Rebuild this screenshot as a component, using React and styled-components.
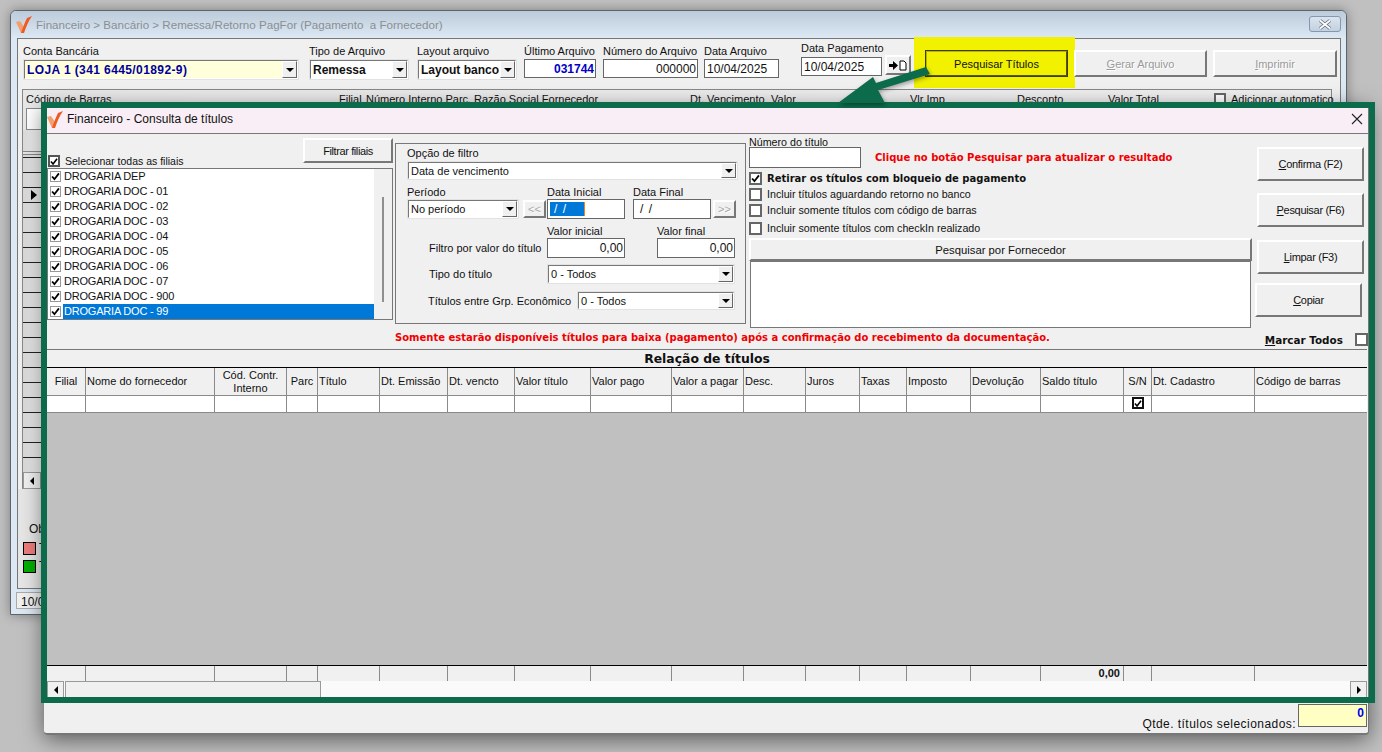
import React from "react";
import styled, { createGlobalStyle } from "styled-components";

const GlobalStyle = createGlobalStyle`
  html, body { margin: 0; padding: 0; height: 100%; overflow: hidden; }
  #root { height: 100%; }
  * { box-sizing: border-box; }
  body {
    font-family: "Liberation Sans", Arial, sans-serif;
    font-size: 11px;
    color: #111;
  }
`;

const GREEN = "#0b6b4b";
const GRAY = "#f0f0f0";
const LINE = "#8a8a8a";

const Desktop = styled.div`
  position: relative;
  width: 1382px;
  height: 752px;
  background: #c0c0c0;
  overflow: hidden;
`;

/* ---------- janela de trás ---------- */
const BackWindow = styled.div`
  position: absolute;
  left: 10px;
  top: 10px;
  width: 1337px;
  height: 605px;
  display: flex;
  flex-direction: column;
  border: 1px solid #5f6468;
  border-radius: 6px 6px 0 0;
  background: #dce8f3;
  box-shadow: 0 0 12px rgba(0, 0, 0, 0.35);
`;

const BackTitle = styled.div`
  height: 26px;
  flex: none;
  display: flex;
  align-items: center;
  justify-content: space-between;
  padding: 0 5px 0 5px;
  border-radius: 6px 6px 0 0;
  background: linear-gradient(#bccbda, #dbe7f3);
  color: #8a8f94;
  font-size: 11.6px;
`;

const TitleLeft = styled.div`
  display: flex;
  align-items: center;
  gap: 4px;
`;

const WinClose = styled.div`
  width: 32px;
  height: 16px;
  display: flex;
  align-items: center;
  justify-content: center;
  border: 1px solid #8398ad;
  border-radius: 3px;
  background: linear-gradient(#dbe5ef, #c2d0df);
`;

const BackBody = styled.div`
  flex: 1;
  padding: 1px 5px 4px 6px;
  display: flex;
  flex-direction: column;
  min-height: 0;
`;

const BackPanel = styled.div`
  height: 551px;
  flex: none;
  display: flex;
  flex-direction: column;
  border: 1px solid #777;
  background: ${GRAY};
`;

const TopBar = styled.div`
  height: 50px;
  flex: none;
  display: flex;
  align-items: flex-start;
  padding: 6px 0 0 5px;
`;

const Field = styled.div`
  display: flex;
  flex-direction: column;
  width: ${(p) => p.$w}px;
  margin-left: ${(p) => p.$ml || 0}px;
  margin-top: ${(p) => p.$mt || 0}px;
`;

const Label = styled.label`
  display: block;
  height: ${(p) => p.$h || 14}px;
  line-height: 12px;
  white-space: nowrap;
`;

const Input = styled.div`
  height: ${(p) => p.$h || 20}px;
  width: ${(p) => (p.$w ? `${p.$w}px` : "100%")};
  flex: none;
  border: 1px solid #666;
  background: #fff;
  display: flex;
  align-items: center;
  justify-content: ${(p) => (p.$right ? "flex-end" : "flex-start")};
  padding: 0 1px 0 2px;
  font-size: 12px;
  color: ${(p) => p.$color || "#111"};
  font-weight: ${(p) => (p.$bold ? "bold" : "normal")};
  white-space: nowrap;
  overflow: hidden;
`;

const ComboBox = styled.div`
  height: ${(p) => p.$h || 20}px;
  width: ${(p) => (p.$w ? `${p.$w}px` : "100%")};
  flex: none;
  display: flex;
  align-items: center;
  justify-content: space-between;
  border: 2px solid;
  border-color: #777 #fff #fff #777;
  outline: 1px solid #e2e2e2;
  outline-offset: -1px;
  background: ${(p) => p.$bg || "#fff"};
  padding-left: 2px;
  font-size: ${(p) => p.$fs || 12}px;
  font-weight: ${(p) => (p.$bold ? "bold" : "normal")};
  letter-spacing: ${(p) => p.$ls || 0}px;
  color: ${(p) => p.$color || "#111"};
  white-space: nowrap;
  overflow: hidden;
`;

const ComboArrow = styled.span`
  width: 15px;
  height: 100%;
  flex: none;
  display: flex;
  align-items: center;
  justify-content: center;
  background: ${GRAY};
  border: 1px solid;
  border-color: #fff #666 #666 #fff;
  &::after {
    content: "";
    border-left: 4px solid transparent;
    border-right: 4px solid transparent;
    border-top: 4px solid #000;
  }
`;

const Button = styled.button`
  width: ${(p) => p.$w}px;
  height: ${(p) => p.$h}px;
  margin-left: ${(p) => p.$ml || 0}px;
  margin-top: ${(p) => p.$mt || 0}px;
  flex: none;
  padding: 0;
  background: ${(p) => p.$bg || GRAY};
  border: 2px solid;
  border-color: #fff #777 #777 #fff;
  font: inherit;
  font-size: 11px;
  letter-spacing: ${(p) => p.$ls || 0}px;
  color: ${(p) => (p.$off ? "#9a9a9a" : "#111")};
  text-shadow: ${(p) => (p.$off ? "1px 1px 0 #fff" : "none")};
  display: flex;
  align-items: center;
  justify-content: center;
  white-space: pre;
`;

const YellowMark = styled.div`
  width: 161px;
  height: 51px;
  margin: -8px 0 0 3px;
  flex: none;
  padding: 13px 0 0 11px;
  background: #f1f100;
`;

const DarkButton = styled(Button)`
  border-color: #b3b300 #575700 #575700 #b3b300;
  outline: 1px solid #3e3e00;
  outline-offset: -1px;
  background: #f1f100;
`;

const BackGrid = styled.div`
  margin: 0 8px 0 4px;
  height: 400px;
  flex: none;
  border: 1px solid #888;
  border-bottom: 0;
  display: flex;
  flex-direction: column;
  background: linear-gradient(90deg, #e8e8e8, ${GRAY});
`;

const BackHead = styled.div`
  height: 15px;
  flex: none;
  display: grid;
  grid-template-columns: 316px 27px 108px 216px 81px 139px 107px 91px 106px 1fr;
  padding-top: 3px;
  line-height: 12px;
  white-space: nowrap;
`;

const HeadCode = styled.span`
  padding-left: 3px;
`;

const AutoAdd = styled.span`
  display: flex;
  align-items: center;
  gap: 5px;
`;

const FilterBox = styled.div`
  margin: 3px 0 0 3px;
  height: 22px;
  flex: none;
  width: 100px;
  border: 1px solid #888;
  background: #fff;
`;

const HeaderCell = styled.div`
  width: 18px;
  height: 22px;
  flex: none;
  background: linear-gradient(90deg, #dcdcdc, #f8f8f8);
  border-bottom: 1px solid #888;
`;

const IndicatorCol = styled.div`
  margin-top: 2px;
  width: 18px;
  flex: 1;
  display: flex;
  flex-direction: column;
  border-top: 1px solid #888;
  overflow: hidden;
`;

const IndicatorRow = styled.div`
  height: 15px;
  flex: none;
  border-bottom: 1px solid #222;
  background: linear-gradient(90deg, #d8d8d8, #f0f0f0);
  display: flex;
  align-items: center;
  justify-content: center;
  &:first-child { height: 3px; }
`;

const RowPointer = styled.span`
  border-top: 5px solid transparent;
  border-bottom: 5px solid transparent;
  border-left: 6px solid #000;
  margin-left: 4px;
`;

const SmallScroll = styled.div`
  width: 18px;
  height: 17px;
  flex: none;
  border: 1px solid #999;
  background: ${GRAY};
  display: flex;
  align-items: center;
  justify-content: center;
`;

const ArrowLeft = styled.span`
  border-top: 4px solid transparent;
  border-bottom: 4px solid transparent;
  border-right: 4px solid #000;
`;

const ArrowRight = styled.span`
  border-top: 4px solid transparent;
  border-bottom: 4px solid transparent;
  border-left: 4px solid #000;
`;

const ObsBlock = styled.div`
  padding: 33px 0 0 5px;
  flex: 1;
  background: linear-gradient(90deg, #e6e6e6, ${GRAY});
  display: flex;
  flex-direction: column;
  font-size: 12px;
`;

const ObsTitle = styled.div`
  padding-left: 6px;
  height: 17px;
`;

const LegendRow = styled.div`
  display: flex;
  align-items: center;
  gap: 3px;
  height: 18px;
`;

const Swatch = styled.span`
  width: 13px;
  height: 13px;
  border: 1px solid #000;
  background: ${(p) => p.$color};
`;

const StatusBox = styled.div`
  margin: 3px 0 0 -1px;
  width: 80px;
  height: 17px;
  flex: none;
  border: 1px solid #aaa;
  background: ${GRAY};
  padding: 2px 0 0 4px;
  font-size: 12px;
`;

/* ---------- dialogo ---------- */
const Dialog = styled.div`
  position: absolute;
  left: 44px;
  top: 105px;
  width: 1325px;
  height: 630px;
  display: flex;
  flex-direction: column;
  padding-left: 3px;
  background: ${GRAY};
  border-right: 1px solid #777;
  border-bottom: 2px solid #777;
  border-radius: 0 0 4px 4px;
  box-shadow: 0 4px 22px rgba(0, 0, 0, 0.55);
`;

const GreenFrame = styled.div`
  position: absolute;
  left: -3px;
  top: -3px;
  width: 1334px;
  height: 601px;
  border: 6px solid ${GREEN};
  pointer-events: none;
`;

const DialogTitle = styled.div`
  margin-top: 2px;
  height: 27px;
  flex: none;
  display: flex;
  align-items: center;
  justify-content: space-between;
  padding: 0 4px 2px 0;
  background: #f9eef5;
  border-bottom: 1px solid #777;
  font-size: 12px;
`;

const CloseX = styled.span`
  width: 14px;
  height: 14px;
  display: flex;
`;

const FormRow = styled.div`
  height: 195px;
  flex: none;
  display: flex;
`;

const FilialCol = styled.div`
  width: 346px;
  flex: none;
  display: flex;
  flex-direction: column;
`;

const FilialHead = styled.div`
  display: flex;
  align-items: flex-end;
  justify-content: space-between;
  padding: 6px 0 0 1px;
  height: 34px;
  font-size: 10.5px;
`;

const CheckLine = styled.div`
  display: flex;
  align-items: center;
  gap: ${(p) => p.$gap || 5}px;
  height: ${(p) => p.$h || 12}px;
  margin-top: ${(p) => p.$mt || 0}px;
  font-weight: ${(p) => (p.$bold ? "bold" : "normal")};
  font-family: ${(p) => (p.$bold ? '"DejaVu Sans", sans-serif' : "inherit")};
  font-size: ${(p) => (p.$bold ? "10px" : "inherit")};
  white-space: nowrap;
`;

const Box = styled.span`
  width: ${(p) => p.$s || 13}px;
  height: ${(p) => p.$s || 13}px;
  flex: none;
  display: flex;
  align-items: center;
  justify-content: center;
  background: #fff;
  border: ${(p) => p.$bw || 2}px solid ${(p) => p.$bc || "#666"};
`;

const RowCheck = styled(Box)`
  margin-bottom: 2px;
`;

const FilterButton = styled(Button)`
  margin-bottom: 5px;
`;

const FilialList = styled.div`
  height: 152px;
  flex: none;
  display: flex;
  border: 1px solid #777;
  background: #fff;
`;

const FilialItems = styled.div`
  flex: 1;
  display: flex;
  flex-direction: column;
`;

const FilialItem = styled.div`
  height: 15px;
  flex: none;
  display: flex;
  align-items: center;
  padding-left: 2px;
  gap: 2px;
  font-size: 11px;
  letter-spacing: -0.2px;
  & > em {
    flex: 1;
    font-style: normal;
    line-height: 15px;
    padding-left: 1px;
    background: ${(p) => (p.$active ? "#0078d7" : "transparent")};
    color: ${(p) => (p.$active ? "#fff" : "#111")};
  }
`;

const ListTrack = styled.div`
  width: 18px;
  flex: none;
  background: ${GRAY};
  display: flex;
  justify-content: center;
  padding-top: 28px;
`;

const ListThumb = styled.span`
  width: 2px;
  height: 105px;
  background: #8f8f8f;
`;

const GroupBox = styled.div`
  margin: 9px 0 0 2px;
  width: 351px;
  height: 181px;
  flex: none;
  border: 1px solid #777;
  padding: 3px 0 0 11px;
  display: flex;
  flex-direction: column;
`;

const FlexLine = styled.div`
  display: flex;
  align-items: ${(p) => p.$align || "flex-start"};
  margin-top: ${(p) => p.$mt || 0}px;
  padding-left: ${(p) => p.$pl || 0}px;
`;

const FieldCaption = styled.span`
  width: ${(p) => p.$w}px;
  flex: none;
  white-space: nowrap;
  font-size: 11px;
`;

const ValueInput = styled(Input)`
  margin-left: ${(p) => p.$ml || 0}px;
`;

const ArrowButton = styled(Button)`
  color: #a8a8a8;
  font-size: 11px;
  text-shadow: 1px 1px 0 #fff;
`;

const Masked = styled.span`
  display: inline-block;
  width: ${(p) => p.$w || 40}px;
  height: 14px;
  padding-left: 4px;
  line-height: 14px;
  background: ${(p) => (p.$sel ? "#0078d7" : "transparent")};
  border-right: ${(p) => (p.$sel ? "1px solid #f08020" : "none")};
  color: ${(p) => (p.$sel ? "#fff" : "#111")};
  letter-spacing: 1px;
`;

const RightCol = styled.div`
  margin-left: 3px;
  width: 503px;
  flex: none;
  display: flex;
  flex-direction: column;
  padding-top: 2px;
  font-size: 10.7px;
`;

const RedText = styled.span`
  color: #f00000;
  font-family: "DejaVu Sans", sans-serif;
  font-weight: bold;
  font-size: 10px;
  white-space: nowrap;
  margin-left: ${(p) => p.$ml || 0}px;
`;

const FornecedorButton = styled(Button)`
  width: 503px;
  height: 23px;
  margin-top: 4px;
  font-size: 11.3px;
`;

const FornecedorBox = styled.div`
  margin-left: 1px;
  width: 501px;
  height: 67px;
  flex: none;
  border: 1px solid #777;
  background: #fff;
`;

const ActionCol = styled.div`
  margin-left: 4px;
  flex: 1;
  display: flex;
  flex-direction: column;
  padding-top: 13px;
`;

const ActionButton = styled(Button)`
  letter-spacing: -0.3px;
`;

const NoticeRow = styled.div`
  height: 20px;
  flex: none;
  display: flex;
  align-items: flex-start;
  padding: 3px 0 0 348px;
  gap: 215px;
`;

const MarkAll = styled.div`
  display: flex;
  align-items: center;
  gap: 12px;
  margin-top: 1px;
  font-family: "DejaVu Sans", sans-serif;
  font-weight: bold;
  font-size: 10.4px;
  white-space: nowrap;
`;

const TableArea = styled.div`
  flex: none;
  height: 349px;
  margin-right: 1px;
  display: flex;
  flex-direction: column;
  border-top: 1px solid #777;
`;

const TableTitle = styled.div`
  height: 18px;
  flex: none;
  text-align: center;
  font-weight: bold;
  font-family: "DejaVu Sans", sans-serif;
  font-size: 12.4px;
  line-height: 18px;
  border-bottom: 1px solid #000;
`;

const COLS = [39, 129, 72, 31, 62, 68, 67, 76, 81, 72, 62, 54, 47, 64, 70, 83, 28, 103, 113];

const TableRow = styled.div`
  display: grid;
  grid-template-columns: ${COLS.map((c) => `${c}px`).join(" ")};
  height: ${(p) => p.$h}px;
  flex: none;
  background: ${(p) => p.$bg || GRAY};
  border-top: ${(p) => (p.$top ? "1px solid #000" : "none")};
  border-bottom: ${(p) => (p.$bottom ? `1px solid ${LINE}` : "none")};
`;

const Cell = styled.div`
  display: flex;
  align-items: center;
  justify-content: ${(p) => p.$align || "flex-start"};
  padding: 0 ${(p) => (p.$align === "flex-end" ? 3 : 1)}px 0 1px;
  border-right: 1px solid ${LINE};
  text-align: center;
  line-height: 13px;
  white-space: pre-line;
  overflow: hidden;
  font-weight: ${(p) => (p.$bold ? "bold" : "normal")};
  &:last-child { border-right: 0; }
`;

const TableEmpty = styled.div`
  flex: 1;
  background: #c0c0c0;
`;

const HScroll = styled.div`
  height: 17px;
  flex: none;
  display: flex;
  background: #fafafa;
`;

const ScrollBtn = styled.div`
  width: 17px;
  flex: none;
  display: flex;
  align-items: center;
  justify-content: center;
  background: ${GRAY};
  border: 1px solid #9a9a9a;
`;

const ScrollThumb = styled.div`
  width: 256px;
  margin-left: 1px;
  background: ${GRAY};
  border: 1px solid #9a9a9a;
`;

const ScrollSpace = styled.div`
  flex: 1;
`;

const BottomBar = styled.div`
  flex: 1;
  display: flex;
  justify-content: flex-end;
  align-items: flex-start;
  gap: 2px;
  padding: 6px 1px 0 0;
`;

const QtyLabel = styled.span`
  margin-top: 13px;
  font-size: 12px;
  letter-spacing: 0.45px;
`;

const QtyBox = styled.div`
  width: 69px;
  height: 23px;
  border: 1px solid #666;
  background: #ffffc4;
  color: #0000f0;
  font-weight: bold;
  font-size: 12px;
  text-align: right;
  padding: 1px 2px 0 0;
`;

const ArrowOverlay = styled.svg`
  position: absolute;
  left: 830px;
  top: 60px;
  width: 110px;
  height: 50px;
  pointer-events: none;
  filter: drop-shadow(1px 2px 2px rgba(0, 0, 0, 0.35));
`;

const Logo = () => (
  <svg width="16" height="17" viewBox="0 0 16 17">
    <path d="M0 6 L4 5 L8 11 L7 17 L5 17 Z" fill="#f2a06e" />
    <path d="M5 17 L8 17 C10 11 12 6 16 0 L11 2 C9 6 7 11 5 17 Z" fill="#ee5a22" />
  </svg>
);

const Tick = ({ size = 9 }) => (
  <svg width={size} height={size} viewBox="0 0 10 10">
    <path d="M1.2 5 L3.8 8 L8.8 1.5" fill="none" stroke="#000" strokeWidth="2" />
  </svg>
);

const CloseGlyph = () => (
  <svg width="14" height="11" viewBox="0 0 14 11">
    <path d="M2 1.5 L12 9.5 M12 1.5 L2 9.5" stroke="#5f6b78" strokeWidth="3.4" />
    <path d="M2 1.5 L12 9.5 M12 1.5 L2 9.5" stroke="#fff" strokeWidth="1.8" />
  </svg>
);

const ArrowDocIcon = () => (
  <svg width="18" height="11" viewBox="0 0 18 11">
    <path d="M0 4 H4 V1 L9 5.5 L4 10 V7 H0 Z" fill="#000" />
    <path d="M11 1 H15 L17 3 V10 H11 Z" fill="#fff" stroke="#000" />
  </svg>
);

const filiais = [
  "DROGARIA DEP",
  "DROGARIA DOC - 01",
  "DROGARIA DOC - 02",
  "DROGARIA DOC - 03",
  "DROGARIA DOC - 04",
  "DROGARIA DOC - 05",
  "DROGARIA DOC - 06",
  "DROGARIA DOC - 07",
  "DROGARIA DOC - 900",
  "DROGARIA DOC - 99",
];

const headers = [
  "Filial",
  "Nome do fornecedor",
  "Cód. Contr.\nInterno",
  "Parc",
  "Título",
  "Dt. Emissão",
  "Dt. vencto",
  "Valor título",
  "Valor pago",
  "Valor a pagar",
  "Desc.",
  "Juros",
  "Taxas",
  "Imposto",
  "Devolução",
  "Saldo título",
  "S/N",
  "Dt. Cadastro",
  "Código de barras",
];

const indicatorRows = Array.from({ length: 22 });

export default function App() {
  return (
    <Desktop>
      <GlobalStyle />
      <BackWindow>
        <BackTitle>
          <TitleLeft>
            <Logo />
            Financeiro &gt; Bancário &gt; Remessa/Retorno PagFor (Pagamento&nbsp; a Fornecedor)
          </TitleLeft>
          <WinClose><CloseGlyph /></WinClose>
        </BackTitle>
        <BackBody>
          <BackPanel>
            <TopBar>
              <Field $w={276}>
                <Label>Conta Bancária</Label>
                <ComboBox $h={21} $bg="#ffffdc" $bold $color="#00009c" $ls={0.4}>
                  LOJA 1 (341 6445/01892-9)
                  <ComboArrow />
                </ComboBox>
              </Field>
              <Field $w={100} $ml={10}>
                <Label>Tipo de Arquivo</Label>
                <ComboBox $h={21} $bold>
                  Remessa
                  <ComboArrow />
                </ComboBox>
              </Field>
              <Field $w={100} $ml={8}>
                <Label>Layout arquivo</Label>
                <ComboBox $h={21} $bold>
                  Layout banco
                  <ComboArrow />
                </ComboBox>
              </Field>
              <Field $w={72} $ml={7}>
                <Label>Último Arquivo</Label>
                <Input $h={19} $right $bold $color="#0000c8">031744</Input>
              </Field>
              <Field $w={95} $ml={7}>
                <Label>Número do Arquivo</Label>
                <Input $h={19} $right>000000</Input>
              </Field>
              <Field $w={75} $ml={6}>
                <Label>Data Arquivo</Label>
                <Input $h={19}>10/04/2025</Input>
              </Field>
              <Field $w={81} $ml={22} $mt={-3}>
                <Label $h={15}>Data Pagamento</Label>
                <Input $h={19}>10/04/2025</Input>
              </Field>
              <Button $w={26} $h={20} $ml={3} $mt={10}><ArrowDocIcon /></Button>
              <YellowMark>
                <DarkButton $w={143} $h={27}>Pesquisar Títulos</DarkButton>
              </YellowMark>
              <Button $w={133} $h={27} $ml={-1} $mt={5} $off>
                <span><u>G</u>erar Arquivo</span>
              </Button>
              <Button $w={124} $h={27} $ml={6} $mt={5} $off>
                <span><u>I</u>mprimir</span>
              </Button>
            </TopBar>
            <BackGrid>
              <BackHead>
                <HeadCode>Código de Barras</HeadCode>
                <span>Filial</span>
                <span>Número Interno Parc.</span>
                <span>Razão Social Fornecedor</span>
                <span>Dt. Vencimento</span>
                <span>Valor</span>
                <span>Vlr Imp</span>
                <span>Desconto</span>
                <span>Valor Total</span>
                <AutoAdd>
                  <Box $s={12} />
                  Adicionar automatico
                </AutoAdd>
              </BackHead>
              <FilterBox />
              <HeaderCell />
              <IndicatorCol>
                {indicatorRows.map((_, i) => (
                  <IndicatorRow key={i}>{i === 3 && <RowPointer />}</IndicatorRow>
                ))}
              </IndicatorCol>
              <SmallScroll>
                <ArrowLeft />
              </SmallScroll>
            </BackGrid>
            <ObsBlock>
              <ObsTitle>Observação</ObsTitle>
              <LegendRow>
                <Swatch $color="#ee7b7b" />
                Títulos
              </LegendRow>
              <LegendRow>
                <Swatch $color="#00ae00" />
                Títulos
              </LegendRow>
            </ObsBlock>
          </BackPanel>
          <StatusBox>10/04/2025</StatusBox>
        </BackBody>
      </BackWindow>

      <Dialog>
        <DialogTitle>
          <TitleLeft>
            <Logo />
            Financeiro - Consulta de títulos
          </TitleLeft>
          <CloseX>
            <svg width="14" height="14" viewBox="0 0 14 14">
              <path d="M2 2 L12 12 M12 2 L2 12" stroke="#222" strokeWidth="1.1" />
            </svg>
          </CloseX>
        </DialogTitle>
        <FormRow>
          <FilialCol>
            <FilialHead>
              <CheckLine $h={14} $gap={5}>
                <Box $s={12} $bc="#555"><Tick /></Box>
                Selecionar todas as filiais
              </CheckLine>
              <FilterButton $w={90} $h={25} $ls={-0.4}>Filtrar filiais</FilterButton>
            </FilialHead>
            <FilialList>
              <FilialItems>
                {filiais.map((f, i) => (
                  <FilialItem key={f} $active={i === filiais.length - 1}>
                    <Box $s={11} $bw={1} $bc="#999"><Tick /></Box>
                    <em>{f}</em>
                  </FilialItem>
                ))}
              </FilialItems>
              <ListTrack>
                <ListThumb />
              </ListTrack>
            </FilialList>
          </FilialCol>

          <GroupBox>
            <Label $h={14}>Opção de filtro</Label>
            <ComboBox $w={331} $h={19} $fs={11}>
              Data de vencimento
              <ComboArrow />
            </ComboBox>
            <FlexLine $mt={6}>
              <Field $w={112}>
                <Label $h={13}>Período</Label>
                <ComboBox $h={20} $fs={11}>
                  No período
                  <ComboArrow />
                </ComboBox>
              </Field>
              <ArrowButton $w={23} $h={18} $ml={4} $mt={14}>&lt;&lt;</ArrowButton>
              <Field $w={78} $ml={1}>
                <Label $h={13}>Data Inicial</Label>
                <Input $h={20}><Masked $w={35} $sel>/ /</Masked></Input>
              </Field>
              <Field $w={78} $ml={8}>
                <Label $h={13}>Data Final</Label>
                <Input $h={20}><Masked> / /</Masked></Input>
              </Field>
              <ArrowButton $w={23} $h={18} $ml={2} $mt={14}>&gt;&gt;</ArrowButton>
            </FlexLine>
            <FlexLine $mt={6} $pl={140}>
              <Field $w={110}><Label $h={13}>Valor inicial</Label></Field>
              <Label $h={13}>Valor final</Label>
            </FlexLine>
            <FlexLine $align="center" $pl={22}>
              <FieldCaption $w={118}>Filtro por valor do título</FieldCaption>
              <Input $w={78} $h={20} $right>0,00</Input>
              <ValueInput $w={78} $h={20} $right $ml={32}>0,00</ValueInput>
            </FlexLine>
            <FlexLine $align="center" $pl={22} $mt={6}>
              <FieldCaption $w={118}>Tipo do título</FieldCaption>
              <ComboBox $w={188} $h={20} $fs={11}>
                0 - Todos
                <ComboArrow />
              </ComboBox>
            </FlexLine>
            <FlexLine $align="center" $pl={21} $mt={7}>
              <FieldCaption $w={149}>Títulos entre Grp. Econômico</FieldCaption>
              <ComboBox $w={158} $h={19} $fs={11}>
                0 - Todos
                <ComboArrow />
              </ComboBox>
            </FlexLine>
          </GroupBox>

          <RightCol>
            <Label $h={11}>Número do título</Label>
            <FlexLine $align="center">
              <Input $w={112} $h={21} />
              <RedText $ml={14}>Clique no botão Pesquisar para atualizar o resultado</RedText>
            </FlexLine>
            <CheckLine $bold $mt={4} $h={12} $gap={5}>
              <Box $s={13}><Tick /></Box>
              Retirar os títulos com bloqueio de pagamento
            </CheckLine>
            <CheckLine $mt={4} $gap={5}>
              <Box $s={13} />
              Incluir títulos aguardando retorno no banco
            </CheckLine>
            <CheckLine $mt={4} $gap={5}>
              <Box $s={13} />
              Incluir somente títulos com código de barras
            </CheckLine>
            <CheckLine $mt={6} $gap={5}>
              <Box $s={13} />
              Incluir somente títulos com checkIn realizado
            </CheckLine>
            <FornecedorButton>Pesquisar por Fornecedor</FornecedorButton>
            <FornecedorBox />
          </RightCol>

          <ActionCol>
            <ActionButton $w={107} $h={34} $ml={1}><span><u>C</u>onfirma (F2)</span></ActionButton>
            <ActionButton $w={107} $h={34} $ml={1} $mt={12}><span><u>P</u>esquisar (F6)</span></ActionButton>
            <ActionButton $w={107} $h={34} $ml={1} $mt={13}><span><u>L</u>impar (F3)</span></ActionButton>
            <ActionButton $w={107} $h={34} $ml={-1} $mt={9}><span><u>C</u>opiar</span></ActionButton>
          </ActionCol>
        </FormRow>

        <NoticeRow>
          <RedText>Somente estarão disponíveis títulos para baixa (pagamento) após a confirmação do recebimento da documentação.</RedText>
          <MarkAll>
            <span><u>M</u>arcar Todos</span>
            <Box $s={13} />
          </MarkAll>
        </NoticeRow>

        <TableArea>
          <TableTitle>Relação de títulos</TableTitle>
          <TableRow $h={28} $bottom>
            {headers.map((h, i) => (
              <Cell key={h} $align={i === 0 || i === 2 || i === 3 || i === 16 ? "center" : "flex-start"}>{h}</Cell>
            ))}
          </TableRow>
          <TableRow $h={17} $bg="#fff" $bottom>
            {headers.map((h) => (
              <Cell key={h} $align="center">
                {h === "S/N" && <RowCheck $s={12} $bc="#111"><Tick /></RowCheck>}
              </Cell>
            ))}
          </TableRow>
          <TableEmpty />
          <TableRow $h={16} $top>
            {headers.map((h) => (
              <Cell key={h} $align="flex-end" $bold>
                {h === "Saldo título" ? "0,00" : ""}
              </Cell>
            ))}
          </TableRow>
          <HScroll>
            <ScrollBtn><ArrowLeft /></ScrollBtn>
            <ScrollThumb />
            <ScrollSpace />
            <ScrollBtn><ArrowRight /></ScrollBtn>
          </HScroll>
        </TableArea>

        <BottomBar>
          <QtyLabel>Qtde. títulos selecionados:</QtyLabel>
          <QtyBox>0</QtyBox>
        </BottomBar>
        <GreenFrame />
      </Dialog>

      <ArrowOverlay viewBox="830 60 110 50">
        <path d="M926 67 L930 74 L878 90 L885 103 L838 103 L873 77 L876 83 Z" fill={GREEN} />
      </ArrowOverlay>
    </Desktop>
  );
}
